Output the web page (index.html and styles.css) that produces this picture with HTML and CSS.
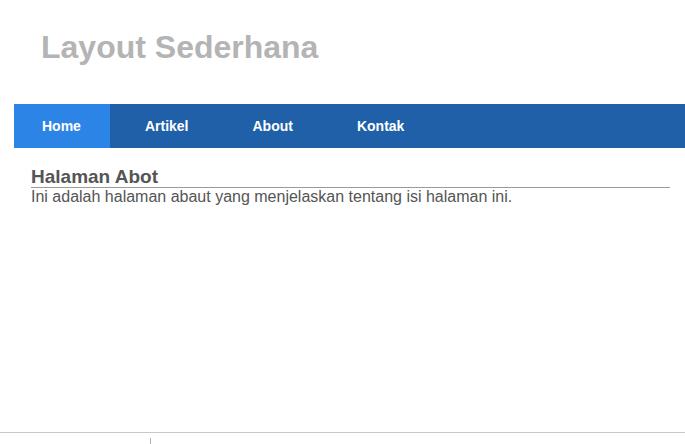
FILE: index.html
```html
<!DOCTYPE html>
<html lang="id">
<head>
<meta charset="utf-8">
<title>Layout Sederhana</title>
<link rel="stylesheet" href="styles.css">
</head>
<body>
<div class="page">
  <div class="wrap">
    <header class="header">
      <h1 class="title">Layout Sederhana</h1>
    </header>
    <nav class="nav">
      <a class="nav-item active" href="#">Home</a>
      <a class="nav-item" href="#">Artikel</a>
      <a class="nav-item" href="#">About</a>
      <a class="nav-item" href="#">Kontak</a>
    </nav>
    <main class="content">
      <h3 class="heading">Halaman Abot</h3>
      <p class="text">Ini adalah halaman abaut yang menjelaskan tentang isi halaman ini.</p>
    </main>
  </div>
  <footer class="footer"><span class="tick"></span></footer>
</div>
</body>
</html>
```

FILE: styles.css
```css
html, body {
  margin: 0;
  padding: 0;
  background: #ffffff;
}

body {
  font-family: "Liberation Sans", Arial, Helvetica, sans-serif;
}

.page {
  min-height: 100vh;
  display: flex;
  flex-direction: column;
}

.wrap {
  flex: 1;
  margin-left: 14px;
}

.header {
  padding: 29px 0 38px 27px;
}

.title {
  margin: 0;
  font-size: 32px;
  font-weight: bold;
  color: #b4b4b4;
  line-height: 37px;
}

.nav {
  display: flex;
  gap: 8px;
  height: 44px;
  background: #1f60a9;
}

.nav-item {
  display: block;
  padding: 0 28px;
  line-height: 44px;
  font-size: 14px;
  font-weight: bold;
  color: #ffffff;
  text-decoration: none;
}

.nav-item.active {
  background: #2c84e6;
  padding-right: 29px;
}

.nav-item.active + .nav-item {
  margin-left: -1px;
}

.content {
  padding: 18px 15px 0 17px;
  color: #555555;
}

.heading {
  margin: 0;
  font-size: 19px;
  font-weight: bold;
  line-height: 21px;
  border-bottom: 1px solid #9a9a9a;
}

.text {
  margin: 0;
  font-size: 16px;
  line-height: 18px;
  color: #555555;
}

.footer {
  height: 11px;
  border-top: 1px solid #c8c8c8;
  padding-left: 150px;
}

.tick {
  display: block;
  width: 1px;
  height: 6px;
  margin-top: 5px;
  background: #b0b0b0;
}
```
